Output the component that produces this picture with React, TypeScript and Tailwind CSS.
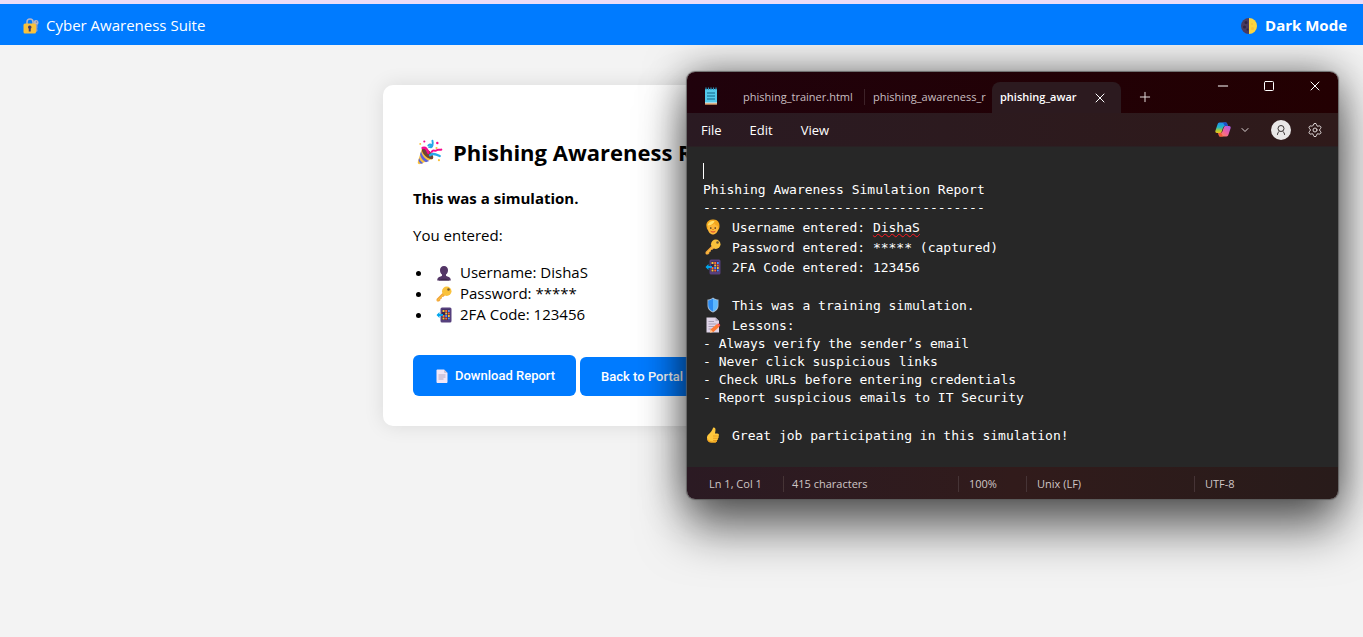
import React from 'react';
import type { ReactNode } from 'react';
import { ChevronDown, Minus, Plus, Settings, Square, X } from 'lucide-react';

type IconProps = { className?: string };

function LockIcon({ className }: IconProps) {
  return (
    <svg viewBox="0 0 32 32" className={className} aria-hidden="true">
      <path d="M8 14V8a6 6 0 0 1 12 0v6" fill="none" stroke="#b9b6c4" strokeWidth="3" />
      <circle cx="26" cy="9" r="5" fill="#b9b6c4" />
      <circle cx="27" cy="8" r="1.500" fill="#6f7fa8" />
      <path d="M25 12v14l2 2 2-2v-3l-1-1 1-2v-7z" fill="#a29fae" />
      <rect x="1" y="11" width="25" height="20" rx="3" fill="#f9c23c" />
      <path d="M13.500 15a3.500 3.500 0 0 1 2 6.400V27h-4v-5.600a3.500 3.500 0 0 1 2-6.400z" fill="#433b6b" />
    </svg>
  );
}

function MoonIcon({ className }: IconProps) {
  return (
    <svg viewBox="0 0 32 32" className={className} aria-hidden="true">
      <path d="M16 0a16 16 0 0 0 0 32z" fill="#4a3a5e" />
      <path d="M16 0a16 16 0 0 1 0 32z" fill="#fcd53f" />
      <circle cx="10" cy="9" r="3" fill="#2f2440" />
      <circle cx="7" cy="18" r="3" fill="#2f2440" />
      <circle cx="13" cy="23" r="2" fill="#2f2440" />
      <circle cx="22" cy="12" r="2" fill="#f9c23c" />
      <circle cx="23" cy="21" r="3" fill="#f9c23c" />
    </svg>
  );
}

function PartyIcon({ className }: IconProps) {
  return (
    <svg viewBox="0 0 32 32" className={className} aria-hidden="true">
      <path d="M6 12 1 28c-.6 2 1 3.400 3 2.800L20 24z" fill="#f9c23c" />
      <path d="M5 15c1 5 5 10 10 12l-4 1.500C7 26.500 4.500 23 3.800 19z" fill="#5b63d9" />
      <path d="M2.600 23.500c.8 2.500 2.500 4.800 5 6.200L5 30.600C3.500 29.600 2.500 28 1.900 26.300z" fill="#5b63d9" />
      <ellipse cx="13" cy="18" rx="4" ry="9" transform="rotate(-46 13 18)" fill="#6d4534" />
      <path d="M7 11c4-1 5 1 7 6" fill="none" stroke="#f70a8d" strokeWidth="3.200" strokeLinecap="round" />
      <path d="M14 8c3-3 5 0 2 2 3 1 4-4 3-8" fill="none" stroke="#26a7e8" strokeWidth="2.400" strokeLinecap="round" />
      <path d="M18 16c2-4 4 0 6-2s4 0 6-1" fill="none" stroke="#f70a8d" strokeWidth="2.400" strokeLinecap="round" />
      <path d="M16 20c4-3 8-1 12 1" fill="none" stroke="#26a7e8" strokeWidth="2.800" strokeLinecap="round" />
      <circle cx="9" cy="3" r="1.300" fill="#f70a8d" />
      <circle cx="25" cy="5" r="1.500" fill="#f70a8d" />
      <circle cx="4" cy="6" r="1.200" fill="#f9c23c" />
      <circle cx="24" cy="11" r="1.300" fill="#f9c23c" />
      <circle cx="27" cy="26" r="1.300" fill="#f9c23c" />
    </svg>
  );
}

function PersonIcon({ className }: IconProps) {
  return (
    <svg viewBox="0 0 32 32" className={className} aria-hidden="true">
      <path d="M16 2c5 0 8 3.500 8 8 0 4-1.500 7-4 9v2c0 1 1 1.500 3 2 4 1 6.500 3 6.500 7v1h-27v-1c0-4 2.500-6 6.500-7 2-.5 3-1 3-2v-2c-2.500-2-4-5-4-9 0-4.500 3-8 8-8z" fill="#533566" />
      <path d="M5 31c4-5 18-5 22 0z" fill="#3f2850" />
    </svg>
  );
}

function KeyIcon({ className }: IconProps) {
  return (
    <svg viewBox="0 0 32 32" className={className} aria-hidden="true">
      <path d="M13 14 1.500 25.500c-.7.700-.7 4.500.3 5.200 1 .7 4 .7 5-.3l2-2v-2.600l3-.8v-3l3.200-.4 4-4z" fill="#f2a63b" />
      <circle cx="21.500" cy="10.500" r="9.500" fill="#f9c23c" />
      <circle cx="25" cy="7" r="2.500" fill="#6b5630" />
      <path d="M3 29 14 18" stroke="#f9c23c" strokeWidth="2" />
    </svg>
  );
}

function PhoneIcon({ className }: IconProps) {
  return (
    <svg viewBox="0 0 32 32" className={className} aria-hidden="true">
      <rect x="9" y="1" width="22" height="30" rx="3" fill="#56407d" />
      <rect x="12" y="5" width="16" height="21" fill="#332454" />
      <path d="M13 6h4v4h-4zM18.500 11h4v4h-4zM24 16h3.500v4H24zM13 21h4v4h-4z" fill="#f9c23c" />
      <path d="M18.500 6h4v4h-4zM24 11h3.500v4H24zM18.500 21h4v4h-4zM13 16h4v4h-4z" fill="#ff6d3a" />
      <path d="M24 6h3.500v4H24zM18.500 16h4v4h-4zM24 21h3.500v4H24z" fill="#5092ff" />
      <path d="M7 10v4h7v4H7v4l-6-6z" fill="#00a6ed" />
    </svg>
  );
}

function PageIcon({ className }: IconProps) {
  return (
    <svg viewBox="0 0 32 32" className={className} aria-hidden="true">
      <path d="M5 5c0-1 1-2 2-2h13l7 7v18c0 1-1 2-2 2H7c-1 0-2-1-2-2z" fill="#f1e6f7" />
      <path d="M20 3l7 7h-5c-1 0-2-1-2-2z" fill="#cdc4d6" />
      <path d="M9 14h14M9 18h14M9 22h10" stroke="#b3a8c2" strokeWidth="2" />
    </svg>
  );
}

function BlondIcon({ className }: IconProps) {
  return (
    <svg viewBox="0 0 32 32" className={className} aria-hidden="true">
      <path d="M3 15C1 6 9 0 16 1c8-1 14 6 13 14-.5 7-4 8-4 8H7s-3.500-2-4-8z" fill="#f2a71e" />
      <path d="M6 14c5 0 10-2 13-5 1 3 4 4 7 5v6c0 6-5 11-10 11S6 26 6 20z" fill="#fdb83a" />
      <path d="M5 13C7 5 14 3 19 4c-1 5-7 9-14 9z" fill="#ffe06b" />
      <circle cx="11.500" cy="18" r="1.700" fill="#4a2d1c" />
      <circle cx="20.500" cy="18" r="1.700" fill="#4a2d1c" />
      <path d="M12 25c2 1.500 6 1.500 8 0" stroke="#d03b2f" strokeWidth="2" fill="none" strokeLinecap="round" />
      <path d="M15 21h2" stroke="#e88a1a" strokeWidth="2" strokeLinecap="round" />
    </svg>
  );
}

function ShieldIcon({ className }: IconProps) {
  return (
    <svg viewBox="0 0 32 32" className={className} aria-hidden="true">
      <path d="M16 1c-4 3-7 4-11 4v11c0 8 4 12 11 15 7-3 11-7 11-15V5c-4 0-7-1-11-4z" fill="#a9bdd0" />
      <path d="M16 3c-3 2.500-6 3.500-9.500 3.800V16c0 7 4 10.500 9.500 13z" fill="#2d8cf0" />
      <path d="M16 3c3 2.500 6 3.500 9.500 3.800V16c0 7-4 10.500-9.500 13z" fill="#5cb8ff" />
    </svg>
  );
}

function MemoIcon({ className }: IconProps) {
  return (
    <svg viewBox="0 0 32 32" className={className} aria-hidden="true">
      <path d="M3 1h18l7 7v23H3z" fill="#e0d5e8" />
      <path d="M21 1l7 7h-7z" fill="#b8aec4" />
      <path d="M7 9h11M7 14h16M7 19h11M7 24h6" stroke="#a89db5" strokeWidth="2" />
      <path d="M11 25 24 14l5 5-12 11-7 1z" fill="#ff7a33" />
      <path d="M24 14c3-3 9 1 5 5z" fill="#f4464b" />
      <path d="m11 25 5 5-6 1z" fill="#ffce9c" />
    </svg>
  );
}

function ThumbIcon({ className }: IconProps) {
  return (
    <svg viewBox="0 0 32 32" className={className} aria-hidden="true">
      <path d="M16 2c2-2 5 0 5 3 0 4-1 6-1 8h4c4 0 5 3 3 5 1 2 0 4-1 5 0 2-1 3-2 4 0 3-2 4-5 4h-6C7 31 4 27 4 22c0-4 1-6 4-8 4-4 6-7 8-12z" fill="#ffc83d" />
      <path d="M17 18h8M17 22.500h8M17 27h6" stroke="#e89b1c" strokeWidth="1.800" strokeLinecap="round" />
      <path d="M4 22c0 5 3 9 9 9h6c3 0 5-1 5-4-6 3-15 3-20-5z" fill="#f2a41f" />
    </svg>
  );
}

function NotepadIcon({ className }: IconProps) {
  return (
    <svg viewBox="0 0 32 36" className={className} aria-hidden="true">
      <rect x="4" y="4" width="24" height="31" rx="1" fill="#f0ede8" />
      <path d="M4 33h24v2H4z" fill="#c9762b" />
      <rect x="4" y="4" width="24" height="27" rx="1" fill="#53c8ea" />
      <path d="M6 1v5M11 1v5M16 1v5M21 1v5M26 1v5" stroke="#2b94bd" strokeWidth="2.400" />
      <path d="M8 12h16M8 18h16M8 24h16" stroke="#12658a" strokeWidth="2.200" />
    </svg>
  );
}

function CopilotIcon({ className }: IconProps) {
  return (
    <svg viewBox="0 0 32 30" className={className} aria-hidden="true">
      <defs>
        <linearGradient id="cp-left" x1="0" y1="0" x2="0" y2="1">
          <stop offset="0" stopColor="#1f8df0" />
          <stop offset="0.450" stopColor="#23b7c6" />
          <stop offset="0.750" stopColor="#a5c93a" />
          <stop offset="1" stopColor="#f6c018" />
        </linearGradient>
        <linearGradient id="cp-right" x1="1" y1="0" x2="0" y2="1">
          <stop offset="0" stopColor="#a45bf0" />
          <stop offset="0.500" stopColor="#f0609c" />
          <stop offset="1" stopColor="#fb9a45" />
        </linearGradient>
      </defs>
      <path d="M9 1h12c2 0 3 1 3.500 3l1 4h-5c-3 0-4 2-5 5l-2 6c-1 2-2 3-4 3H4c-3 0-4-2-3-5L5 5c.7-2.500 2-4 4-4z" fill="url(#cp-left)" />
      <path d="M16 1h5c2 0 3 1 3.500 3l1 4h-6z" fill="#1b50c9" />
      <path d="M23 29H11c-2 0-3-1-3.500-3l-1-4h4c3 0 4-2 5-5l2-6c1-2 2-3 4-3H28c3 0 4 2 3 5l-4 12c-.7 2.500-2 4-4 4z" fill="url(#cp-right)" />
      <path d="M16 29h-5c-2 0-3-1-3.500-3l-1-4h6z" fill="#f25a3c" />
    </svg>
  );
}

function AccountIcon({ className }: IconProps) {
  return (
    <svg viewBox="0 0 20 20" className={className} aria-hidden="true">
      <circle cx="10" cy="10" r="10" fill="#e9e7e7" />
      <circle cx="10" cy="8.500" r="3" fill="none" stroke="#3a3434" strokeWidth="1" />
      <path d="M6.500 15v-.8a3.800 3.800 0 0 1 2-3M13.500 15v-.8a3.800 3.800 0 0 0-2-3" fill="none" stroke="#3a3434" strokeWidth="1" />
    </svg>
  );
}

const details = [
  { icon: <PersonIcon className="size-4" />, text: 'Username: DishaS' },
  { icon: <KeyIcon className="size-4" />, text: 'Password: *****' },
  { icon: <PhoneIcon className="size-4" />, text: '2FA Code: 123456' },
];

function Line({ icon, children }: { icon?: ReactNode; children?: ReactNode }) {
  if (icon) {
    return (
      <div className="flex h-5 items-center">
        <span className="w-[29px] shrink-0 pl-0.5">{icon}</span>
        <span className="pt-0.5">{children}</span>
      </div>
    );
  }
  return <div className="h-[18px] leading-[18px]">{children}</div>;
}

function TitleBar() {
  return (
    <div className="flex h-[41px] bg-linear-to-r from-[#20020c] to-[#230002] text-[11px] text-[#c9bfc1]">
      <div className="flex flex-1 items-end">
        <NotepadIcon className="mb-2 ml-4 h-[18px] w-4" />
        <button className="ml-6 h-[31px] w-[115px] text-left">phishing_trainer.html</button>
        <span className="mb-2 ml-1.5 h-4 w-px bg-[#3d2228]" />
        <button className="ml-2 h-[31px] w-[115px] text-left whitespace-nowrap">phishing_awareness_r</button>
        <div className="ml-1 flex h-[31px] w-[129px] items-center rounded-t-lg bg-[#2c1a1f] pl-2 text-white">
          <button className="w-20 text-left font-semibold whitespace-nowrap">phishing_awar</button>
          <button aria-label="Close tab" className="ml-3">
            <X className="size-4" strokeWidth={1.500} />
          </button>
        </div>
        <button aria-label="New tab" className="mb-2 ml-4 text-[#e4dcdc]">
          <Plus className="size-4" strokeWidth={1.500} />
        </button>
      </div>
      <div className="flex h-7 w-[138px] items-center text-white">
        <button aria-label="Minimize" className="flex flex-1 justify-center">
          <Minus className="size-4" strokeWidth={1.500} />
        </button>
        <button aria-label="Maximize" className="flex flex-1 justify-center">
          <Square className="size-3" strokeWidth={2} />
        </button>
        <button aria-label="Close" className="flex flex-1 justify-center">
          <X className="size-4" strokeWidth={1.500} />
        </button>
      </div>
    </div>
  );
}

function MenuBar() {
  return (
    <div className="flex h-[34px] items-center justify-between border-b border-[#2a2023] bg-linear-to-r from-[#2a1a22] to-[#2f1a1a] pr-[15px] pl-3.5 text-[13px] text-white">
      <nav className="flex gap-7 pt-0.5">
        <button>File</button>
        <button>Edit</button>
        <button>View</button>
      </nav>
      <div className="flex items-center text-[#ded6d6]">
        <button aria-label="Copilot" className="flex items-center gap-2">
          <CopilotIcon className="h-[15px] w-4" />
          <ChevronDown className="size-3" strokeWidth={2} />
        </button>
        <button aria-label="Account" className="ml-5">
          <AccountIcon className="size-5" />
        </button>
        <button aria-label="Settings" className="ml-4">
          <Settings className="size-4" strokeWidth={1.500} />
        </button>
      </div>
    </div>
  );
}

function Editor() {
  return (
    <div
      role="textbox"
      aria-label="Report"
      aria-multiline="true"
      className="h-[320px] bg-[#272727] px-4 pt-4 font-['DejaVu_Sans_Mono',monospace] text-[13px] whitespace-pre text-white"
    >
      <Line>
        <span className="block h-4 w-px bg-white" />
      </Line>
      <Line>Phishing Awareness Simulation Report</Line>
      <Line>------------------------------------</Line>
      <Line icon={<BlondIcon className="size-4" />}>
        Username entered:{' '}
        <span className="underline decoration-[#ff1a22] decoration-wavy decoration-1 underline-offset-1">DishaS</span>
      </Line>
      <Line icon={<KeyIcon className="size-4" />}>Password entered: ***** (captured)</Line>
      <Line icon={<PhoneIcon className="size-4" />}>2FA Code entered: 123456</Line>
      <Line />
      <Line icon={<ShieldIcon className="size-4" />}>This was a training simulation.</Line>
      <Line icon={<MemoIcon className="size-4" />}>Lessons:</Line>
      <Line>- Always verify the sender’s email</Line>
      <Line>- Never click suspicious links</Line>
      <Line>- Check URLs before entering credentials</Line>
      <Line>- Report suspicious emails to IT Security</Line>
      <Line />
      <Line icon={<ThumbIcon className="size-4" />}>Great job participating in this simulation!</Line>
    </div>
  );
}

function StatusBar() {
  return (
    <footer className="flex h-8 items-center bg-linear-to-r from-[#2b1a23] via-[#311b1b] to-[#281b1a] pt-0.5 pl-[22px] text-[11px] text-[#cfc6c6]">
      <span className="w-[74px]">Ln 1, Col 1</span>
      <span className="w-[175px] border-l border-[#463436] pl-2">415 characters</span>
      <span className="w-[68px] border-l border-[#463436] pl-2.5">100%</span>
      <span className="w-[168px] border-l border-[#463436] pl-2.5">Unix (LF)</span>
      <span className="flex-1 border-l border-[#463436] pl-2.5">UTF-8</span>
    </footer>
  );
}

export default function App() {
  return (
    <div className="relative min-h-screen overflow-hidden bg-[#f3f3f3] font-['Open_Sans','Noto_Sans',sans-serif] text-black">
      <header className="relative z-20 border-t-4 border-[#eadcf7] bg-[#007bff] text-white">
        <div className="flex h-[41px] items-center justify-between pt-0.5 pr-4 pl-[23px]">
          <span className="flex items-center gap-[7px] text-[15px]">
            <LockIcon className="size-4" />
            Cyber Awareness Suite
          </span>
          <button className="flex items-center gap-2 text-[15px] font-bold">
            <MoonIcon className="size-4" />
            Dark Mode
          </button>
        </div>
      </header>

      <main className="mx-auto mt-10 max-w-[597px] rounded-[10px] bg-white px-[30px] pt-[49px] pb-[30px] text-[15px] shadow-[0_0_20px_rgba(0,0,0,0.1)]">
        <h1 className="flex h-9 items-center gap-2.5 text-[22px] font-bold whitespace-nowrap">
          <PartyIcon className="ml-1 size-[26px] shrink-0" />
          Phishing Awareness Report
        </h1>
        <p className="mt-[18px] leading-[21px] font-bold">This was a simulation.</p>
        <p className="mt-4 leading-[21px]">You entered:</p>
        <ul className="mt-4 list-disc pl-5 leading-[21px]">
          {details.map((item) => (
            <li key={item.text}>
              <span className="inline-flex items-center gap-2 pl-[3px] align-top">
                {item.icon}
                {item.text}
              </span>
            </li>
          ))}
        </ul>
        <div className="mt-[30px] flex items-end gap-1 font-['Roboto',sans-serif] text-[13px] font-medium text-white">
          <button className="flex h-[41px] items-center gap-[5px] rounded-md bg-[#007bff] px-[21px]">
            <PageIcon className="size-4" />
            Download Report
          </button>
          <button className="h-[39px] rounded-md bg-[#007bff] px-[21px]">Back to Portal</button>
        </div>
      </main>

      <section
        aria-label="Notepad"
        className="absolute top-[72px] right-[25px] z-10 w-[651px] rounded-lg shadow-[0_0_1px_1px_rgba(90,90,90,0.8),0_0_40px_rgba(0,0,0,0.5),0_32px_48px_rgba(0,0,0,0.5)]"
      >
        <div className="overflow-hidden rounded-lg">
          <TitleBar />
          <MenuBar />
          <Editor />
          <StatusBar />
        </div>
      </section>
    </div>
  );
}
